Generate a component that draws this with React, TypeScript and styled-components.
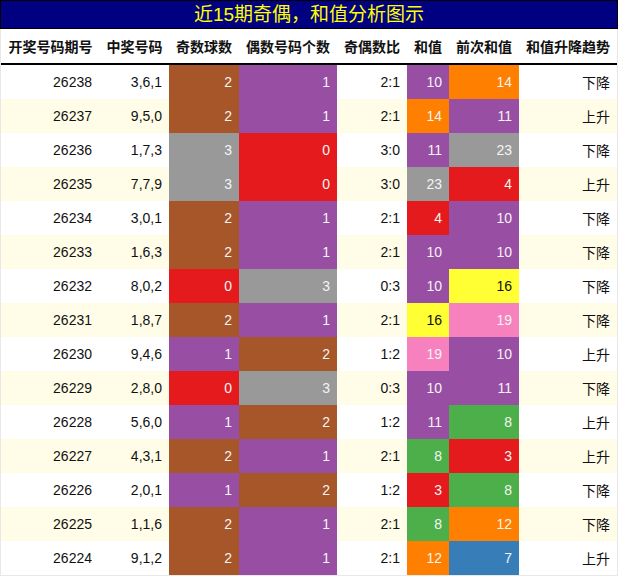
import React from "react";
import styled, { createGlobalStyle } from "styled-components";

const GlobalStyle = createGlobalStyle`
  html, body { margin: 0; padding: 0; background: #ffffff; }
  body { font-family: "Liberation Sans", "Noto Sans CJK SC", sans-serif; }
`;

const COLS = "99px 69px 70px 98px 70px 42px 70px 98px";

const Wrapper = styled.div`
  width: 618px;
  box-sizing: border-box;
`;

const Title = styled.div`
  height: 29px;
  box-sizing: border-box;
  border: 1px solid #000000;
  background: #000080;
  color: #ffff00;
  font-family: "Liberation Sans", "Noto Sans CJK SC", sans-serif;
  font-size: 19px;
  line-height: 27px;
  text-align: center;
`;

const Grid = styled.div`
  border-left: 1px solid #e8e8e8;
  border-right: 1px solid #e8e8e8;
  border-bottom: 1px solid #e8e8e8;
`;

const HeaderRow = styled.div`
  display: grid;
  grid-template-columns: ${COLS};
  height: 34px;
  border-bottom: 2px solid #000000;
  background: #ffffff;
`;

const HeaderCell = styled.div`
  display: flex;
  align-items: center;
  justify-content: center;
  font-family: "Noto Sans CJK SC", sans-serif;
  font-weight: 700;
  font-size: 14px;
  color: #111111;
  white-space: nowrap;
`;

const Row = styled.div<{ $alt: boolean }>`
  display: grid;
  grid-template-columns: ${COLS};
  height: 34px;
  background: ${(p) => (p.$alt ? "#fffde8" : "#ffffff")};
`;

const Cell = styled.div<{ $bg?: string; $fg?: string; $cjk?: boolean; $pad?: number }>`
  display: flex;
  align-items: center;
  justify-content: flex-end;
  padding-right: ${(p) => p.$pad ?? 7}px;
  background: ${(p) => p.$bg ?? "transparent"};
  color: ${(p) => p.$fg ?? "#111111"};
  font-family: ${(p) =>
    p.$cjk ? `"Noto Sans CJK SC", sans-serif` : `"Liberation Sans", sans-serif`};
  font-size: 14px;
  white-space: nowrap;
`;

const RED = "#e41a1c";
const BLUE = "#377eb8";
const GREEN = "#4daf4a";
const PURPLE = "#984ea3";
const ORANGE = "#ff7f00";
const YELLOW = "#ffff33";
const BROWN = "#a65628";
const PINK = "#f781bf";
const GRAY = "#999999";

const countColor: Record<number, string> = { 0: RED, 1: PURPLE, 2: BROWN, 3: GRAY };
const sumColor: Record<number, string> = {
  3: RED,
  4: RED,
  7: BLUE,
  8: GREEN,
  10: PURPLE,
  11: PURPLE,
  12: ORANGE,
  14: ORANGE,
  16: YELLOW,
  19: PINK,
  23: GRAY,
};
const fgFor = (bg: string) => (bg === YELLOW ? "#111111" : "#f4f4f4");

type R = [string, string, number, number, string, number, number, string];

const rows: R[] = [
  ["26238", "3,6,1", 2, 1, "2:1", 10, 14, "下降"],
  ["26237", "9,5,0", 2, 1, "2:1", 14, 11, "上升"],
  ["26236", "1,7,3", 3, 0, "3:0", 11, 23, "下降"],
  ["26235", "7,7,9", 3, 0, "3:0", 23, 4, "上升"],
  ["26234", "3,0,1", 2, 1, "2:1", 4, 10, "下降"],
  ["26233", "1,6,3", 2, 1, "2:1", 10, 10, "下降"],
  ["26232", "8,0,2", 0, 3, "0:3", 10, 16, "下降"],
  ["26231", "1,8,7", 2, 1, "2:1", 16, 19, "下降"],
  ["26230", "9,4,6", 1, 2, "1:2", 19, 10, "上升"],
  ["26229", "2,8,0", 0, 3, "0:3", 10, 11, "下降"],
  ["26228", "5,6,0", 1, 2, "1:2", 11, 8, "上升"],
  ["26227", "4,3,1", 2, 1, "2:1", 8, 3, "上升"],
  ["26226", "2,0,1", 1, 2, "1:2", 3, 8, "下降"],
  ["26225", "1,1,6", 2, 1, "2:1", 8, 12, "下降"],
  ["26224", "9,1,2", 2, 1, "2:1", 12, 7, "上升"],
];

const headers = [
  "开奖号码期号",
  "中奖号码",
  "奇数球数",
  "偶数号码个数",
  "奇偶数比",
  "和值",
  "前次和值",
  "和值升降趋势",
];

export default function App() {
  return (
    <Wrapper>
      <GlobalStyle />
      <Title>近15期奇偶，和值分析图示</Title>
      <Grid>
        <HeaderRow>
          {headers.map((h) => (
            <HeaderCell key={h}>{h}</HeaderCell>
          ))}
        </HeaderRow>
        {rows.map((r, i) => {
          const [issue, nums, odd, even, ratio, sum, prev, trend] = r;
          const oc = countColor[odd];
          const ec = countColor[even];
          const sc = sumColor[sum];
          const pc = sumColor[prev];
          return (
            <Row key={issue} $alt={i % 2 === 1}>
              <Cell $pad={8}>{issue}</Cell>
              <Cell>{nums}</Cell>
              <Cell $bg={oc} $fg={fgFor(oc)}>{odd}</Cell>
              <Cell $bg={ec} $fg={fgFor(ec)}>{even}</Cell>
              <Cell>{ratio}</Cell>
              <Cell $bg={sc} $fg={fgFor(sc)}>{sum}</Cell>
              <Cell $bg={pc} $fg={fgFor(pc)}>{prev}</Cell>
              <Cell $cjk>{trend}</Cell>
            </Row>
          );
        })}
      </Grid>
    </Wrapper>
  );
}
